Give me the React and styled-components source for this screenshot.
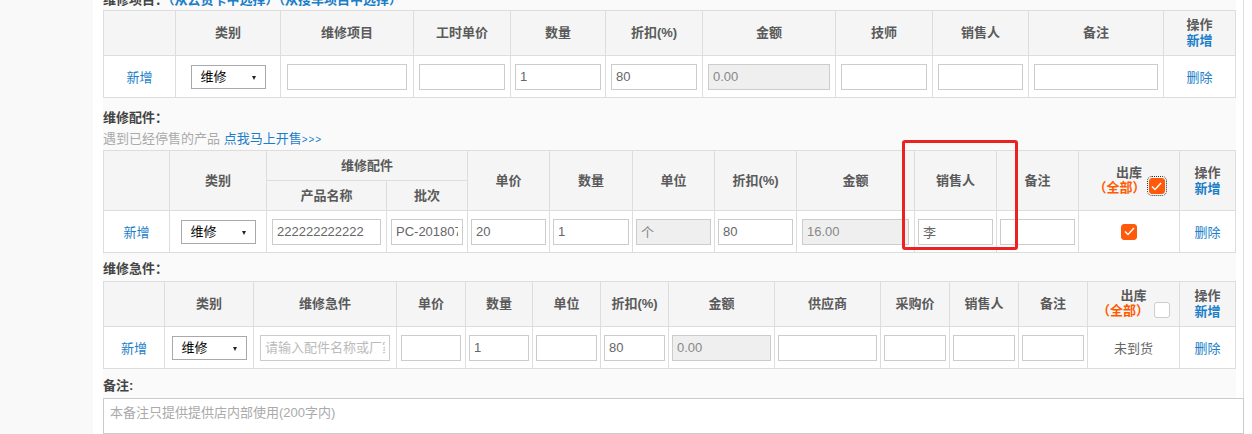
import React from "react";
import styled, { createGlobalStyle } from "styled-components";

const GlobalStyle = createGlobalStyle`
  html, body {
    margin: 0;
    padding: 0;
    background: #fff;
    font-family: "Liberation Sans", "Noto Sans CJK SC", sans-serif;
    font-size: 13px;
    color: #333;
    overflow: hidden;
  }
`;

const Page = styled.div`
  display: flex;
  height: 434px;
`;

const Sidebar = styled.div`
  width: 93px;
  flex: none;
  background: #f9f9f9;
`;

const Main = styled.div`
  width: 1140px;
  flex: none;
  padding-left: 10px;
  background: #fff;
  border-right: 1px solid #ddd;
`;

const Content = styled.div`
  width: 1133px;
  height: 100%;
  background: #fafafa;
  display: flex;
  flex-direction: column;
`;

const Title = styled.div`
  font-weight: bold;
  color: #444;
  line-height: 20px;
  margin-top: ${(p) => p.$mt}px;
  white-space: nowrap;
`;

const Link = styled.a`
  color: #1a7ec8;
  text-decoration: none;
  cursor: pointer;
  font-weight: ${(p) => (p.$bold ? "bold" : "normal")};
`;

const Hint = styled.div`
  color: #aaa;
  line-height: 20px;
  margin-top: 1px;
  small {
    color: #1a7ec8;
    font-size: 10px;
    letter-spacing: 1px;
  }
`;

const TableWrap = styled.div`
  position: relative;
  margin-top: ${(p) => (p.$mt != null ? p.$mt : 2)}px;
`;

const Table = styled.table`
  width: 1132px;
  border-collapse: collapse;
  table-layout: fixed;
  background: #fff;
`;

const Col = styled.col`
  width: ${(p) => p.$w}px;
`;

const HeadRow = styled.tr`
  height: ${(p) => p.$h}px;
`;

const Th = styled.th`
  background: #f5f5f5;
  border: 1px solid #ddd;
  color: #5a5a5a;
  font-weight: bold;
  padding: 0;
  text-align: center;
  line-height: 16px;
`;

const BodyRow = styled.tr`
  height: 42px;
`;

const Td = styled.td`
  border: 1px solid #ddd;
  text-align: center;
  padding: 0 ${(p) => (p.$pad != null ? p.$pad : 5)}px;
  color: #666;
`;

const Input = styled.input`
  box-sizing: border-box;
  width: 100%;
  height: 26px;
  border: 1px solid #ccc;
  background: ${(p) => (p.disabled ? "#efefef" : "#fff")};
  color: ${(p) => (p.disabled ? "#888" : "#666")};
  font-family: inherit;
  font-size: 13px;
  padding: 0 4px;
  outline: none;
  &::placeholder {
    color: #bbb;
  }
`;

const SelectBox = styled.div`
  position: relative;
  width: 75px;
  height: 24px;
  margin: 0 auto;
  box-sizing: border-box;
  border: 1px solid #a9a9a9;
  background: #fff;
  color: #000;
  text-align: left;
  padding-left: 9px;
  line-height: 22px;
  &::after {
    content: "";
    position: absolute;
    right: 9px;
    top: 10px;
    border-left: 2.5px solid transparent;
    border-right: 2.5px solid transparent;
    border-top: 4px solid #222;
  }
`;

const Orange = styled.span`
  color: #ff5a00;
  font-weight: bold;
`;

const Box = styled.span`
  display: inline-flex;
  align-items: center;
  justify-content: center;
  width: 16px;
  height: 16px;
  box-sizing: border-box;
  border-radius: 3px;
  vertical-align: middle;
  background: ${(p) => (p.$on ? "#ff5a0a" : "#fff")};
  border: 1px solid ${(p) => (p.$on ? "#ff5a0a" : "#ccc")};
  outline: ${(p) => (p.$focus ? "1px dotted #333" : "none")};
  outline-offset: 1px;
  margin-left: ${(p) => p.$ml || 0}px;
  position: relative;
  top: ${(p) => (p.$lift ? -2 : 0)}px;
`;

const StockHead = styled.div`
  line-height: 15px;
`;

const Stack = styled.div`
  line-height: 16px;
`;

const RedMark = styled.div`
  position: absolute;
  left: 799px;
  top: -10px;
  width: 116px;
  height: 110px;
  box-sizing: border-box;
  border: 3px solid #ec2121;
  border-radius: 3px;
  pointer-events: none;
`;

const Textarea = styled.textarea`
  box-sizing: border-box;
  width: 1141px;
  height: 60px;
  margin-top: 2px;
  border: 1px solid #ccc;
  font-family: inherit;
  font-size: 13px;
  color: #666;
  padding: 3px 6px;
  resize: none;
  outline: none;
  &::placeholder {
    color: #aaa;
  }
`;

const Check = () => (
  <svg width="11" height="9" viewBox="0 0 11 9">
    <path d="M1 4.5 L4 7.5 L10 1" fill="none" stroke="#fff" strokeWidth="1.4" />
  </svg>
);

const Select = () => <SelectBox>维修</SelectBox>;

const Field = (props) => <Input readOnly {...props} />;

const OpHead = () => (
  <Stack>
    操作
    <br />
    <Link $bold>新增</Link>
  </Stack>
);

const StockTitle = ({ on }) => (
  <StockHead>
    出库
    <br />
    <Orange>（全部）</Orange>
    <Box $on={on} $focus={!!on} $lift $ml={on ? 3 : 5}>
      {on && <Check />}
    </Box>
  </StockHead>
);

const itemCols = [72, 105, 133, 97, 95, 97, 133, 97, 96, 135, 72];
const partCols = [66, 97, 120, 81, 82, 83, 82, 82, 118, 82, 82, 101, 56];
const urgentCols = [61, 89, 143, 69, 67, 68, 68, 106, 106, 69, 69, 69, 92, 56];

const Cols = ({ list }) => (
  <colgroup>
    {list.map((w, i) => (
      <Col key={i} $w={w} />
    ))}
  </colgroup>
);

export default function App() {
  return (
    <>
      <GlobalStyle />
      <Page>
        <Sidebar />
        <Main>
          <Content>
            <Title $mt={-10}>
              维修项目：<Link $bold>（从云货卡中选择）（从搜车项目中选择）</Link>
            </Title>
            <TableWrap $mt={0}>
              <Table>
                <Cols list={itemCols} />
                <thead>
                  <HeadRow $h={45}>
                    <Th />
                    <Th>类别</Th>
                    <Th>维修项目</Th>
                    <Th>工时单价</Th>
                    <Th>数量</Th>
                    <Th>折扣(%)</Th>
                    <Th>金额</Th>
                    <Th>技师</Th>
                    <Th>销售人</Th>
                    <Th>备注</Th>
                    <Th>
                      <OpHead />
                    </Th>
                  </HeadRow>
                </thead>
                <tbody>
                  <BodyRow>
                    <Td>
                      <Link>新增</Link>
                    </Td>
                    <Td>
                      <Select />
                    </Td>
                    <Td $pad={6}>
                      <Field defaultValue="" />
                    </Td>
                    <Td>
                      <Field defaultValue="" />
                    </Td>
                    <Td $pad={4}>
                      <Field defaultValue="1" />
                    </Td>
                    <Td>
                      <Field defaultValue="80" />
                    </Td>
                    <Td>
                      <Field disabled defaultValue="0.00" />
                    </Td>
                    <Td>
                      <Field defaultValue="" />
                    </Td>
                    <Td>
                      <Field defaultValue="" />
                    </Td>
                    <Td>
                      <Field defaultValue="" />
                    </Td>
                    <Td>
                      <Link>删除</Link>
                    </Td>
                  </BodyRow>
                </tbody>
              </Table>
            </TableWrap>

            <Title $mt={10}>维修配件：</Title>
            <Hint>
              遇到已经停售的产品 <Link>点我马上开售</Link>
              <small>&gt;&gt;&gt;</small>
            </Hint>
            <TableWrap $mt={0}>
              <Table>
                <Cols list={partCols} />
                <thead>
                  <HeadRow $h={30}>
                    <Th rowSpan={2} />
                    <Th rowSpan={2}>类别</Th>
                    <Th colSpan={2}>维修配件</Th>
                    <Th rowSpan={2}>单价</Th>
                    <Th rowSpan={2}>数量</Th>
                    <Th rowSpan={2}>单位</Th>
                    <Th rowSpan={2}>折扣(%)</Th>
                    <Th rowSpan={2}>金额</Th>
                    <Th rowSpan={2}>销售人</Th>
                    <Th rowSpan={2}>备注</Th>
                    <Th rowSpan={2}>
                      <StockTitle on />
                    </Th>
                    <Th rowSpan={2}>
                      <OpHead />
                    </Th>
                  </HeadRow>
                  <HeadRow $h={30}>
                    <Th>产品名称</Th>
                    <Th>批次</Th>
                  </HeadRow>
                </thead>
                <tbody>
                  <BodyRow>
                    <Td>
                      <Link>新增</Link>
                    </Td>
                    <Td>
                      <Select />
                    </Td>
                    <Td>
                      <Field defaultValue="222222222222" />
                    </Td>
                    <Td $pad={4}>
                      <Field defaultValue="PC-20180724001" />
                    </Td>
                    <Td $pad={3}>
                      <Field defaultValue="20" />
                    </Td>
                    <Td $pad={3}>
                      <Field defaultValue="1" />
                    </Td>
                    <Td $pad={3}>
                      <Field disabled defaultValue="个" />
                    </Td>
                    <Td $pad={3}>
                      <Field defaultValue="80" />
                    </Td>
                    <Td $pad={5}>
                      <Field disabled defaultValue="16.00" />
                    </Td>
                    <Td $pad={3}>
                      <Field defaultValue="李" />
                    </Td>
                    <Td $pad={3}>
                      <Field defaultValue="" />
                    </Td>
                    <Td>
                      <Box $on>
                        <Check />
                      </Box>
                    </Td>
                    <Td>
                      <Link>删除</Link>
                    </Td>
                  </BodyRow>
                </tbody>
              </Table>
              <RedMark />
            </TableWrap>

            <Title $mt={6}>维修急件：</Title>
            <TableWrap $mt={2}>
              <Table>
                <Cols list={urgentCols} />
                <thead>
                  <HeadRow $h={45}>
                    <Th />
                    <Th>类别</Th>
                    <Th>维修急件</Th>
                    <Th>单价</Th>
                    <Th>数量</Th>
                    <Th>单位</Th>
                    <Th>折扣(%)</Th>
                    <Th>金额</Th>
                    <Th>供应商</Th>
                    <Th>采购价</Th>
                    <Th>销售人</Th>
                    <Th>备注</Th>
                    <Th>
                      <StockTitle />
                    </Th>
                    <Th>
                      <OpHead />
                    </Th>
                  </HeadRow>
                </thead>
                <tbody>
                  <BodyRow>
                    <Td>
                      <Link>新增</Link>
                    </Td>
                    <Td>
                      <Select />
                    </Td>
                    <Td $pad={6}>
                      <Field placeholder="请输入配件名称或厂家编码" />
                    </Td>
                    <Td $pad={4}>
                      <Field defaultValue="" />
                    </Td>
                    <Td $pad={3}>
                      <Field defaultValue="1" />
                    </Td>
                    <Td $pad={3}>
                      <Field defaultValue="" />
                    </Td>
                    <Td $pad={3}>
                      <Field defaultValue="80" />
                    </Td>
                    <Td $pad={3}>
                      <Field disabled defaultValue="0.00" />
                    </Td>
                    <Td $pad={3}>
                      <Field defaultValue="" />
                    </Td>
                    <Td $pad={3}>
                      <Field defaultValue="" />
                    </Td>
                    <Td $pad={3}>
                      <Field defaultValue="" />
                    </Td>
                    <Td $pad={3}>
                      <Field defaultValue="" />
                    </Td>
                    <Td>未到货</Td>
                    <Td>
                      <Link>删除</Link>
                    </Td>
                  </BodyRow>
                </tbody>
              </Table>
            </TableWrap>

            <Title $mt={7}>备注:</Title>
            <Textarea placeholder="本备注只提供提供店内部使用(200字内)" />
          </Content>
        </Main>
      </Page>
    </>
  );
}
